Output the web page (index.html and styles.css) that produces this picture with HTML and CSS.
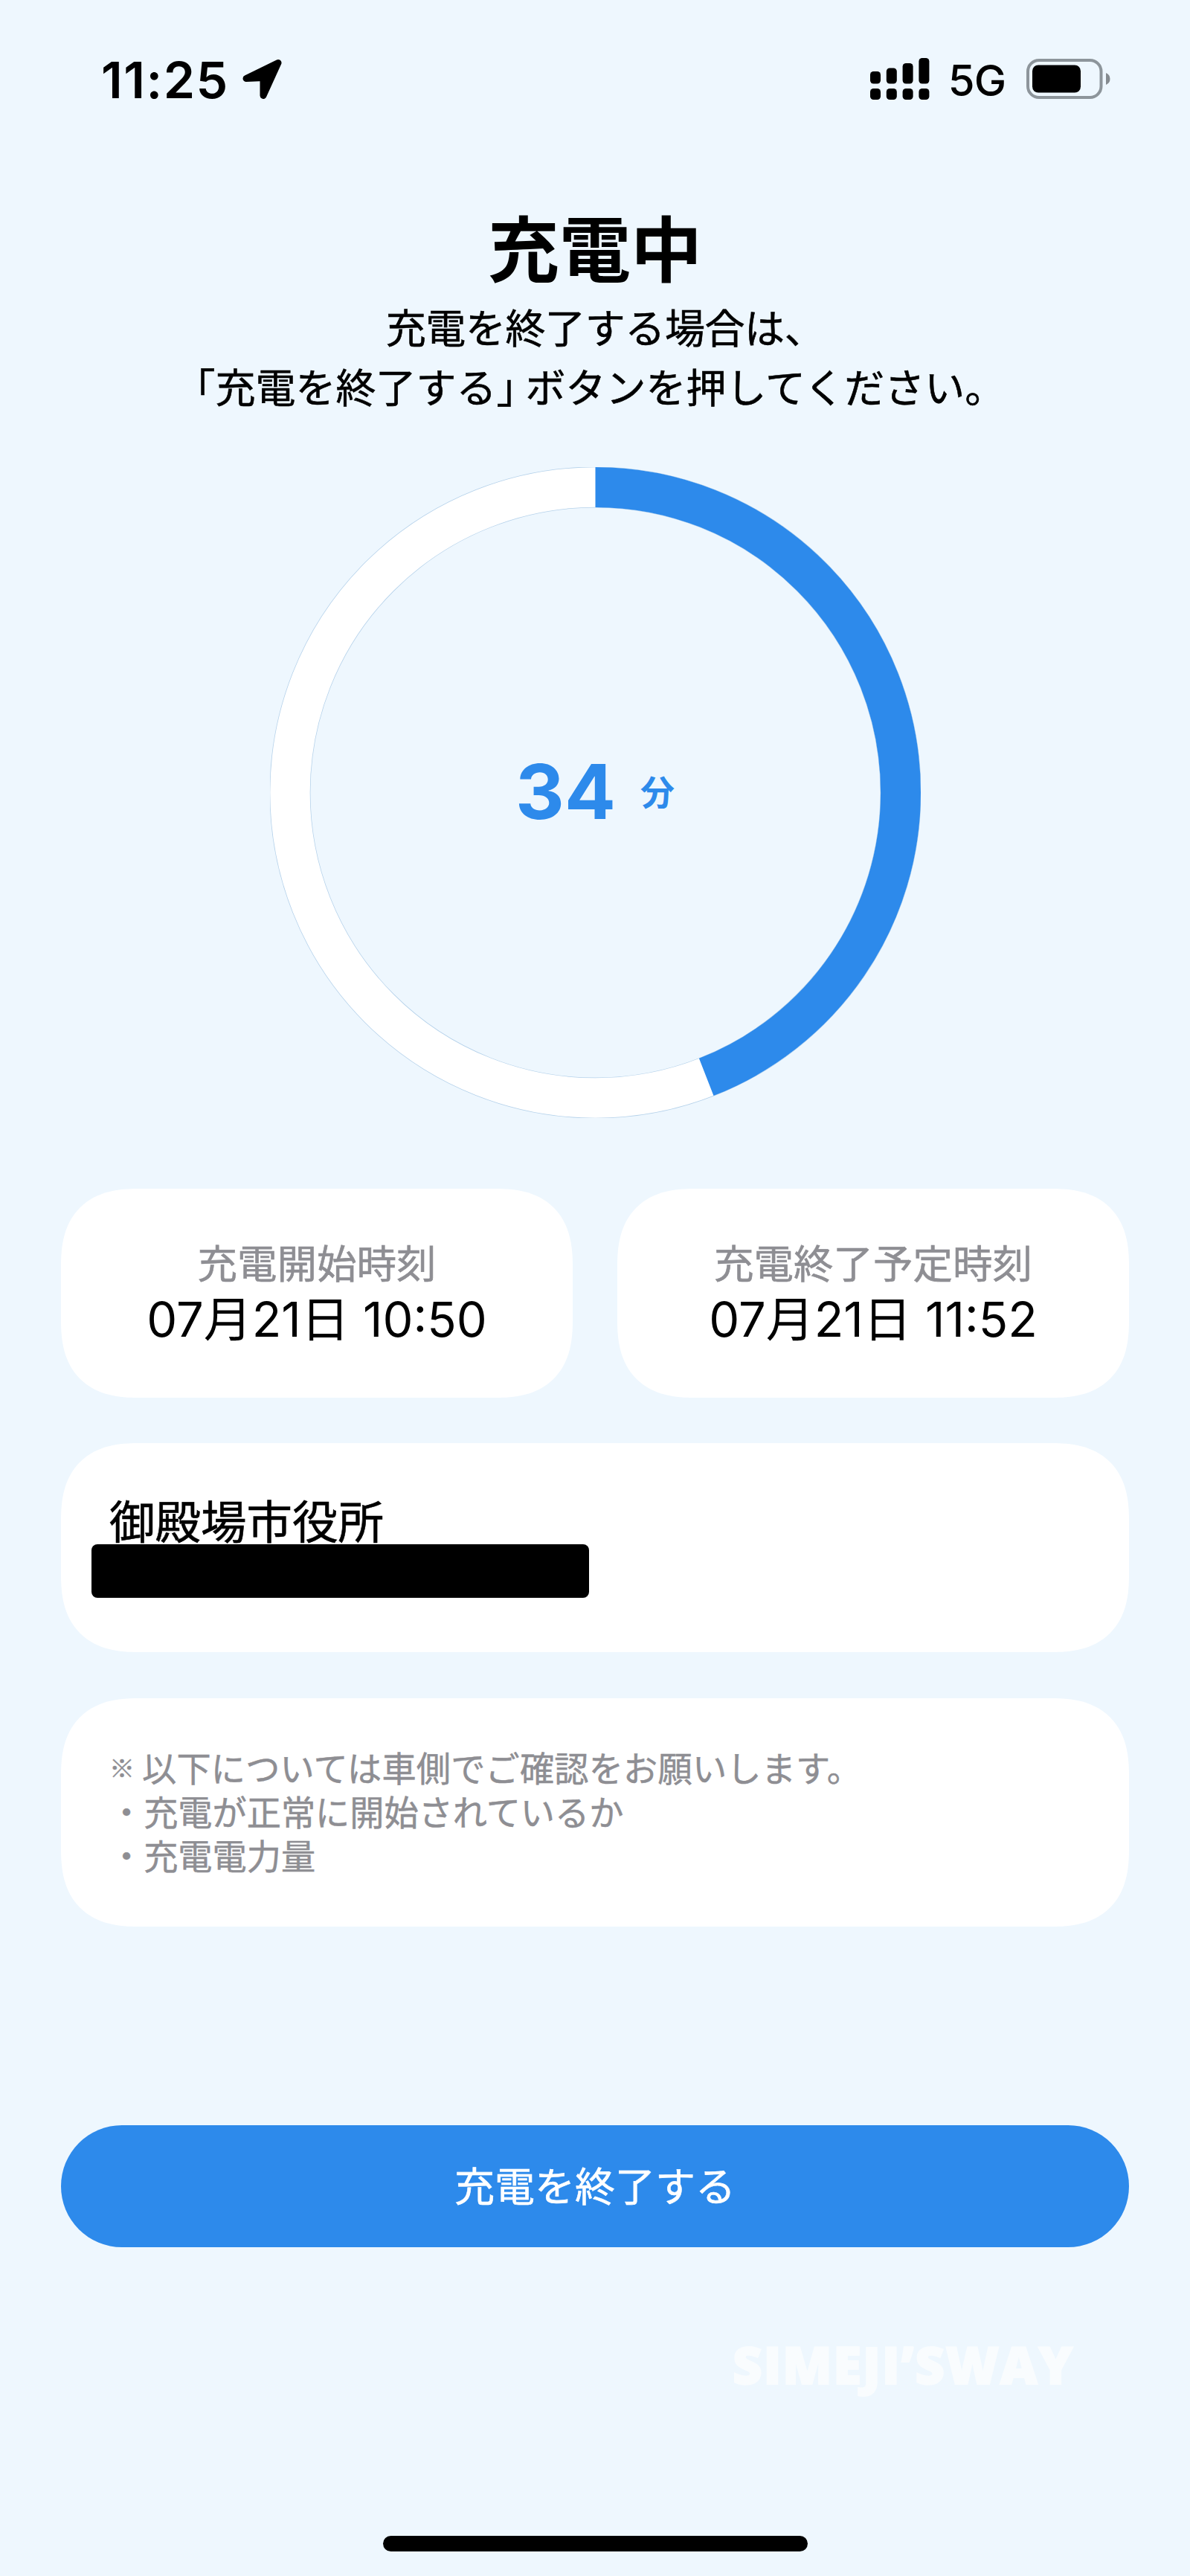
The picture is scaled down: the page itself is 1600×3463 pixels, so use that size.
FILE: index.html
```html
<!DOCTYPE html>
<html lang="ja">
<head>
<meta charset="utf-8">
<title>充電中</title>
<link rel="stylesheet" href="styles.css">
</head>
<body>
<div class="screen">
  <header class="status">
    <span class="time">11:25</span>
    <svg class="location" width="54" height="56" viewBox="0 0 54 56"><path d="M5 26.500 48 5.500 28 49.500V25.500Z" fill="#000" stroke="#000" stroke-width="9" stroke-linejoin="round"/></svg>
    <svg class="signal" width="80" height="56" viewBox="0 0 80 56">
      <rect x="0" y="18" width="14" height="16.500" rx="4.500"/><rect x="21.800" y="13.500" width="14" height="21" rx="4.500"/><rect x="43.600" y="7" width="14" height="27.500" rx="4.500"/><rect x="65.400" y="0" width="14" height="34.500" rx="4.500"/>
      <rect x="0" y="41" width="14" height="15" rx="4.500"/><rect x="21.800" y="41" width="14" height="15" rx="4.500"/><rect x="43.600" y="41" width="14" height="15" rx="4.500"/><rect x="65.400" y="41" width="14" height="15" rx="4.500"/>
    </svg>
    <span class="network">5G</span>
    <svg class="battery" width="114" height="54" viewBox="0 0 114 54">
      <rect x="2" y="2" width="98.500" height="50" rx="15" fill="none" stroke="#8d959b" stroke-width="4"/>
      <rect x="8" y="8.500" width="65" height="37" rx="8"/>
      <path d="M107 19Q112.500 21.500 112.500 27T107 35Z" fill="#858b90"/>
    </svg>
  </header>

  <main class="content">
    <h1 class="title">充電中</h1>
    <p class="lead"><span class="lead-short">充電を終了する場合は<span class="half">、</span></span><br><span class="lead-long"><span class="half">「</span>充電を終了する<span class="half close">」</span>ボタンを押してください。</span></p>

    <div class="gauge">
      <svg class="ring" viewBox="0 0 876 876">
        <circle cx="438" cy="438" r="411" fill="none" stroke="#b4d1ea" stroke-width="55"/>
        <circle cx="438" cy="438" r="411" fill="none" stroke="#fff" stroke-width="53.500"/>
        <circle cx="438" cy="438" r="411" fill="none" stroke="#2d8aeb" stroke-width="54" pathLength="1000" stroke-dasharray="440.800 1000" transform="rotate(-90 438 438)"/>
      </svg>
      <div class="remain"><span class="minutes">34</span><span class="unit">分</span></div>
    </div>

    <div class="times">
      <section class="card time-card"><div class="label">充電開始時刻</div><div class="date">07月21日 10:50</div></section>
      <section class="card time-card"><div class="label">充電終了予定時刻</div><div class="date">07月21日 11:52</div></section>
    </div>

    <section class="card place"><div class="place-name">御殿場市役所</div><div class="redacted"></div></section>

    <section class="card notes">
      <div class="note-head"><span class="mark">※</span><span>以下については車側でご確認をお願いします。</span></div>
      <div>・充電が正常に開始されているか</div>
      <div>・充電電力量</div>
    </section>

    <button class="stop">充電を終了する</button>
  </main>
  <footer class="footer">
    <div class="watermark">SIMEJI’SWAY</div>
    <div class="home"></div>
  </footer>
</div>
</body>
</html>
```
FILE: styles.css
```css
* { box-sizing: border-box; }
body { margin: 0; background: #eef7fe; color: #000; font-family: "Noto Sans CJK JP", sans-serif; }
.screen { width: 1600px; height: 3463px; display: flex; flex-direction: column; overflow: hidden; }
.status { height: 212px; padding: 0 107px 0 136px; display: flex; align-items: center; }
.time { font: 600 68px/80px Inter, sans-serif; letter-spacing: 1.5px; padding-top: 1px; }
.location { margin-left: 18px; margin-top: 2px; }
.signal { margin-left: auto; }
.network { font: 500 58px/70px Inter, sans-serif; margin: 4px 27px 0 25px; letter-spacing: -1px; }
.battery { margin-left: 1px; margin-right: -1px; }

.content { padding: 0 82px; display: flex; flex-direction: column; }
.title { margin: 60px 0 0; font-size: 96px; line-height: 116px; font-weight: 700; text-align: center; }
.lead { margin: 11px 0 0; font-size: 54px; line-height: 80px; text-align: center; white-space: nowrap; -webkit-text-stroke: 0.6px #000; }
.lead-short { letter-spacing: -0.4px; }
.lead-long { padding-left: 14px; }
.half { font-feature-settings: "halt"; }
.close { margin-right: 12px; }

.gauge { display: grid; place-items: center; width: 875px; height: 875px; margin: 69px auto 0; }
.ring, .remain { grid-area: 1 / 1; }
.ring { width: 875px; height: 875px; }
.remain { display: flex; align-items: center; gap: 33px; padding-bottom: 3px; color: #2d8aeb; }
.minutes { font: 700 102px/120px Inter, sans-serif; }
.unit { font-size: 46px; line-height: 60px; font-weight: 600; padding-bottom: 5px; }

.card { background: #fff; border-radius: 84px; }
.times { display: grid; grid-template-columns: 1fr 1fr; gap: 60px; margin-top: 95px; }
.time-card { height: 281px; padding-top: 61px; text-align: center; }
.label { font-size: 53.5px; line-height: 74px; color: #8e8e93; -webkit-text-stroke: 0.6px #8e8e93; }
.date { font-family: Inter, "Noto Sans CJK JP", sans-serif; font-size: 65px; line-height: 80px; padding-top: 1px; }
.place { height: 281px; margin-top: 61px; padding: 68px 41px 0; }
.place-name { margin-left: 24px; font-size: 61.5px; line-height: 70px; -webkit-text-stroke: 0.6px #000; }
.redacted { width: 669px; height: 72px; margin-top: -2px; border-radius: 8px; background: #000; }
.notes { height: 307px; margin-top: 62px; padding: 62px 65px 0; font-size: 46.2px; line-height: 59px; color: #8e8e93; -webkit-text-stroke: 0.5px #8e8e93; }
.note-head { display: flex; letter-spacing: 0.2px; }
.mark { width: 44px; padding-top: 3px; font-size: 34px; line-height: 56px; font-weight: 700; }
.stop { height: 164px; margin-top: 267px; padding: 0 0 5px; border: 0; border-radius: 82px; background: #2d8aeb; color: #fff; font: 400 54px/80px "Noto Sans CJK JP", sans-serif; -webkit-text-stroke: 0.6px #fff; }

.footer { flex: 1; display: flex; flex-direction: column; padding-top: 109px; }
.watermark { align-self: flex-end; margin-right: 156px; font: 800 69px/96px "Open Sans", sans-serif; letter-spacing: 1.6px; color: #f9fcfe; -webkit-text-stroke: 2px #f9fcfe; }
.home { width: 571px; height: 21px; margin: auto auto 33px; border-radius: 11px; background: #000; }
@supports (corner-shape: squircle) {
  .card { border-radius: 104px; corner-shape: superellipse(1.3); }
}
```
